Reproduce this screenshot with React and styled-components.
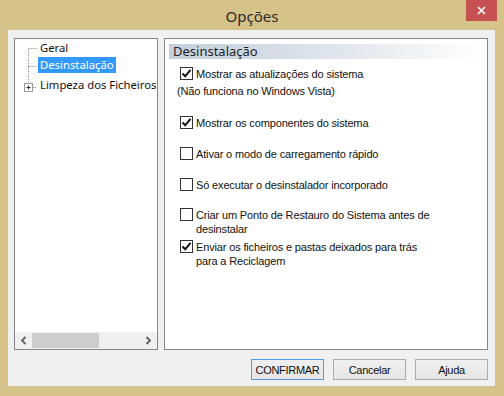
import styled, { createGlobalStyle } from 'styled-components';

const GlobalStyle = createGlobalStyle`
  html, body {
    margin: 0;
    padding: 0;
    background: #d6c38a;
    overflow: hidden;
  }
`;

const options = [
  { label: ['Mostrar as atualizações do sistema'], checked: true, top: 8 },
  { note: '(Não funciona no Windows Vista)', top: 3 },
  { label: ['Mostrar os componentes do sistema'], checked: true, top: 18 },
  { label: ['Ativar o modo de carregamento rápido'], checked: false, top: 17 },
  { label: ['Só executar o desinstalador incorporado'], checked: false, top: 17 },
  { label: ['Criar um Ponto de Restauro do Sistema antes de', 'desinstalar'], checked: false, top: 16 },
  { label: ['Enviar os ficheiros e pastas deixados para trás', 'para a Reciclagem'], checked: true, top: 4 },
];

const Check = ({ checked }) => (
  <Box>
    {checked && (
      <svg width="11" height="11" viewBox="0 0 11 11">
        <path d="M1.5 5.5 L4.2 8.3 L9.5 1.8" fill="none" stroke="#111" strokeWidth="2" />
      </svg>
    )}
  </Box>
);

const Chevron = ({ dir }) => (
  <svg width="7" height="9" viewBox="0 0 7 9">
    <path
      d={dir === 'left' ? 'M5.5 1 L2 4.5 L5.5 8' : 'M1.5 1 L5 4.5 L1.5 8'}
      fill="none"
      stroke="#606060"
      strokeWidth="1.8"
    />
  </svg>
);

const App = () => {
  return (
    <>
      <GlobalStyle />
      <Window>
        <TitleBar>
          <span />
          <Title>Opções</Title>
          <CloseButton>
            <svg width="9" height="9" viewBox="0 0 9 9">
              <path d="M1 1 L8 8 M8 1 L1 8" stroke="#fff" strokeWidth="1.6" />
            </svg>
          </CloseButton>
        </TitleBar>
        <Client>
          <Panels>
            <Tree>
              <TreeList>
                <TreeLines>
                  <svg width="20" height="46" viewBox="0 0 20 46">
                    <path
                      d="M5.5 1 V34 M5.5 0.5 H14 M5.5 18.5 H14 M10 39.5 H14"
                      stroke="#8a8a8a"
                      strokeWidth="1"
                      strokeDasharray="1 1"
                      fill="none"
                    />
                    <rect x="1.5" y="35.5" width="8" height="8" fill="#fff" stroke="#9a9a9a" />
                    <path d="M3.5 39.5 H7.5 M5.5 37.5 V41.5" stroke="#333" strokeWidth="1" />
                  </svg>
                </TreeLines>
                <TreeItem>Geral</TreeItem>
                <TreeItem selected>Desinstalação</TreeItem>
                <TreeItem tall>Limpeza dos Ficheiros</TreeItem>
              </TreeList>
              <ScrollBar>
                <ArrowCell>
                  <Chevron dir="left" />
                </ArrowCell>
                <Track>
                  <Thumb />
                </Track>
                <ArrowCell>
                  <Chevron dir="right" />
                </ArrowCell>
              </ScrollBar>
            </Tree>
            <Page>
              <Header>Desinstalação</Header>
              {options.map((o, i) =>
                o.note ? (
                  <Note key={i} $top={o.top}>{o.note}</Note>
                ) : (
                  <Option key={i} $top={o.top}>
                    <Check checked={o.checked} />
                    <Label>
                      {o.label.map((l, j) => (
                        <span key={j}>{l}</span>
                      ))}
                    </Label>
                  </Option>
                )
              )}
            </Page>
          </Panels>
          <Buttons>
            <Button $default>CONFIRMAR</Button>
            <Button>Cancelar</Button>
            <Button>Ajuda</Button>
          </Buttons>
        </Client>
      </Window>
    </>
  );
};

export default App;

const Window = styled.div`
  width: 504px;
  height: 396px;
  background: #d6c38a;
  display: flex;
  flex-direction: column;
  box-sizing: border-box;
`;

const TitleBar = styled.div`
  height: 30px;
  display: grid;
  grid-template-columns: 1fr auto 1fr;
  align-items: start;
`;

const Title = styled.div`
  font-family: "Noto Sans", "Open Sans", sans-serif;
  font-size: 15px;
  line-height: 20px;
  color: #2b2b2b;
  padding-top: 6px;
`;

const CloseButton = styled.div`
  justify-self: end;
  width: 31px;
  height: 21px;
  margin-right: 7px;
  background: #c75050;
  display: flex;
  align-items: center;
  justify-content: center;
`;

const Client = styled.div`
  flex: 1;
  margin: 0 9px 10px 8px;
  background: #f0f0f0;
  padding: 8px 7px 6px 6px;
  display: flex;
  flex-direction: column;
`;

const Panels = styled.div`
  display: flex;
  gap: 6px;
  height: 312px;
`;

const Tree = styled.div`
  width: 144px;
  box-sizing: border-box;
  border: 1px solid #828790;
  background: #fff;
  display: flex;
  flex-direction: column;
  justify-content: space-between;
`;

const TreeList = styled.div`
  position: relative;
  padding: 0 0 0 23px;
  display: flex;
  flex-direction: column;
`;

const TreeLines = styled.div`
  position: absolute;
  left: 8px;
  top: 9px;
  line-height: 0;
`;

const TreeItem = styled.div`
  font-family: "Noto Sans", "Open Sans", sans-serif;
  font-size: 11.3px;
  line-height: 16px;
  height: 16px;
  margin-top: ${p => (p.tall ? '4px' : '1px')};
  padding: 0 2px;
  width: fit-content;
  white-space: nowrap;
  color: ${p => (p.selected ? '#fff' : '#111')};
  background: ${p => (p.selected ? '#3399ff' : 'transparent')};
`;

const ScrollBar = styled.div`
  height: 17px;
  background: #f0f0f0;
  display: flex;
  align-items: center;
`;

const ArrowCell = styled.div`
  width: 17px;
  height: 17px;
  display: flex;
  align-items: center;
  justify-content: center;
`;

const Track = styled.div`
  flex: 1;
  height: 17px;
  display: flex;
  align-items: center;
`;

const Thumb = styled.div`
  width: 67px;
  height: 15px;
  background: #cdcdcd;
`;

const Page = styled.div`
  flex: 1;
  box-sizing: border-box;
  border: 1px solid #828790;
  background: #fff;
  padding: 5px 4px;
  display: flex;
  flex-direction: column;
`;

const Header = styled.div`
  height: 15px;
  padding-left: 4px;
  font-family: "Noto Sans", "Open Sans", sans-serif;
  font-size: 13px;
  line-height: 15px;
  color: #1e1e1e;
  background: linear-gradient(to right, #c3cfdd 0%, #dde4ec 50%, #ffffff 100%);
`;

const Option = styled.div`
  display: flex;
  align-items: flex-start;
  gap: 3px;
  margin-top: ${p => p.$top}px;
  padding-left: 11px;
`;

const Box = styled.div`
  width: 13px;
  height: 13px;
  box-sizing: border-box;
  border: 1px solid #333;
  background: #fff;
  display: flex;
  align-items: center;
  justify-content: center;
  flex-shrink: 0;
`;

const Label = styled.div`
  display: flex;
  flex-direction: column;
  font-family: "Liberation Sans", Arial, sans-serif;
  font-size: 11px;
  letter-spacing: -0.15px;
  line-height: 14px;
  color: #111;
`;

const Note = styled.div`
  margin-top: ${p => p.$top}px;
  padding-left: 8px;
  font-family: "Liberation Sans", Arial, sans-serif;
  font-size: 11px;
  letter-spacing: -0.15px;
  line-height: 14px;
  color: #111;
`;

const Buttons = styled.div`
  margin-top: 9px;
  display: flex;
  justify-content: flex-end;
  gap: 9px;
`;

const Button = styled.div`
  width: 73px;
  height: 21px;
  box-sizing: border-box;
  border: 1px solid ${p => (p.$default ? '#4a9de6' : '#acacac')};
  background: linear-gradient(#f0f0f0, #e5e5e5);
  font-family: "Liberation Sans", Arial, sans-serif;
  font-size: 11px;
  letter-spacing: -0.3px;
  color: #111;
  display: flex;
  align-items: center;
  justify-content: center;
`;
